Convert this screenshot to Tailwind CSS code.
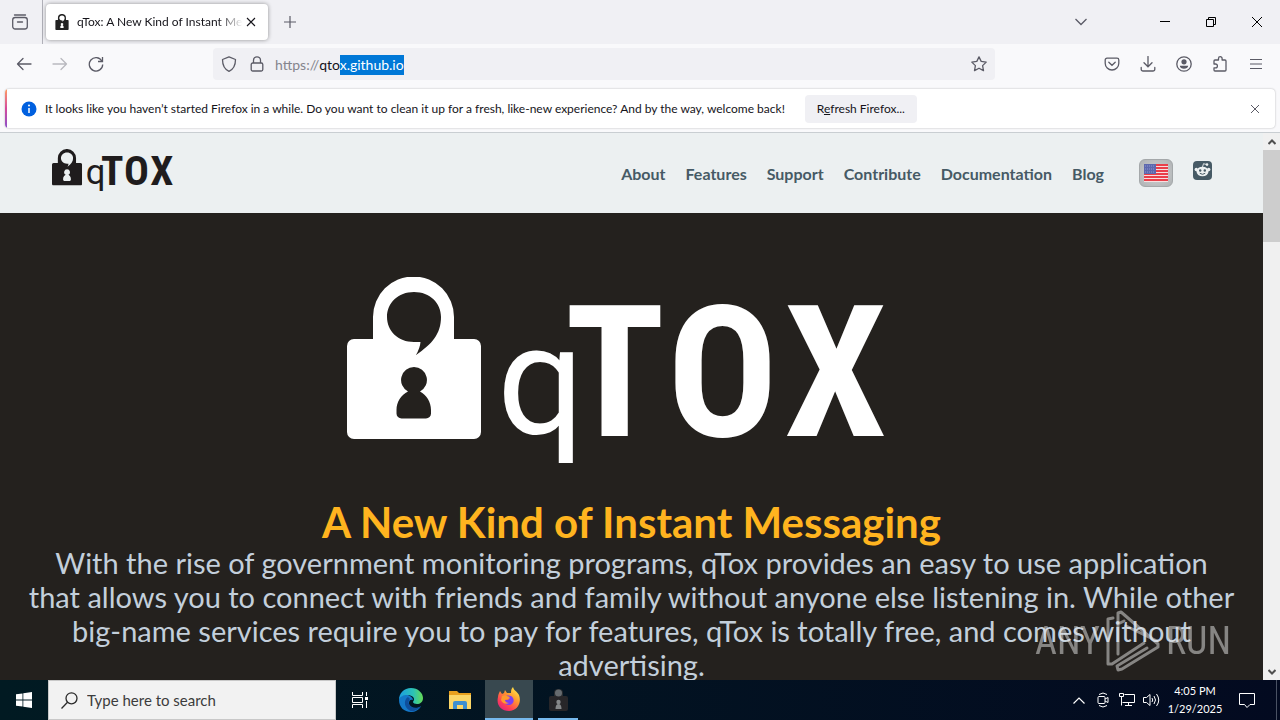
<!DOCTYPE html>
<html lang="en">
<head>
  <meta charset="UTF-8">
  <title>qTox: A New Kind of Instant Messaging</title>
  <script src="https://cdn.jsdelivr.net/npm/@tailwindcss/browser@4"></script>
</head>
<body class="flex flex-col h-screen overflow-hidden bg-[#f9f9fb] text-[#15141a] font-['Lato','Noto_Sans',sans-serif]">

  <svg class="hidden">
    <symbol id="padlock" viewBox="0 0 134 162">
      <path fill-rule="evenodd" d="M26 62V40a40.500 40.500 0 0 1 81 0V62H127a7 7 0 0 1 7 7V155a7 7 0 0 1-7 7H7a7 7 0 0 1-7-7V69a7 7 0 0 1 7-7zM67 15C51 15 40 26 40 40S51 65 67 65H73.500Q73 71 69 78C85 67 94 57 94 40C94 26 83 15 67 15zM67 90a13 13 0 0 0-6 24.500C54 118 49.500 125 49.500 133V136.500a5 5 0 0 0 5 5H79a5 5 0 0 0 5-5V133C84 125 79.500 118 73 114.500A13 13 0 0 0 67 90z"/>
    </symbol>
    <symbol id="qtox-logo" viewBox="0 0 543 186">
      <use href="#padlock" width="134" height="162"/>
      <text x="150" y="157" font-size="154" font-family="Roboto, sans-serif">q</text>
      <g font-size="184" font-weight="700" font-family="'Roboto Condensed', 'Liberation Sans Narrow', Roboto, sans-serif">
        <text x="218" y="159">T</text>
        <text x="320" y="159">O</text>
        <text x="437" y="159">X</text>
      </g>
    </symbol>
  </svg>

  <!-- Tab strip -->
  <header class="flex items-center h-11 shrink-0 bg-[#f0f0f4] text-[#5b5b66]">
    <button aria-label="Firefox View" class="w-10 h-11 flex items-center justify-center">
      <svg class="size-4" viewBox="0 0 16 16" fill="none" stroke="currentColor" stroke-width="1.300"><path d="M2.500 1h11" stroke-linecap="round"/><rect x=".7" y="3.500" width="14.600" height="11.500" rx="2.500"/><path d="M5.500 8h5" stroke-linecap="round"/></svg>
    </button>
    <div class="w-px h-11 ml-[2px] bg-[#b0b0b8]"></div>
    <div class="flex items-center w-[222px] h-9 ml-[3px] px-[9px] bg-white rounded shadow-[0_0_4px_rgba(0,0,0,0.4)] text-[#15141a]">
      <svg class="w-[14px] h-4 shrink-0" fill="#222222"><use href="#padlock"/></svg>
      <span class="flex-1 ml-2 text-xs whitespace-nowrap overflow-hidden mask-r-from-85% mask-r-to-100%">qTox: A New Kind of Instant Messaging</span>
      <button aria-label="Close tab" class="w-4 h-6 flex items-center justify-center">
        <svg class="size-[10px]" viewBox="0 0 10 10" stroke="currentColor" stroke-width="1.100"><path d="M1 1l8 8M9 1l-8 8"/></svg>
      </button>
    </div>
    <button aria-label="New tab" class="size-8 ml-[6px] flex items-center justify-center">
      <svg class="size-3" viewBox="0 0 12 12" stroke="currentColor" stroke-width="1.200"><path d="M6 0v12M0 6h12"/></svg>
    </button>
    <button aria-label="List all tabs" class="size-8 ml-auto mr-[45px] flex items-center justify-center">
      <svg class="w-3 h-2" viewBox="0 0 12 8" fill="none" stroke="currentColor" stroke-width="1.300"><path d="M.5 1L6 6.500 11.500 1"/></svg>
    </button>
    <button aria-label="Minimize" class="w-[46px] h-11 flex items-center justify-center text-black">
      <svg class="size-[10px]" viewBox="0 0 10 10" stroke="currentColor"><path d="M0 4.500h10"/></svg>
    </button>
    <button aria-label="Restore" class="w-[46px] h-11 flex items-center justify-center text-black">
      <svg class="size-[10px]" viewBox="0 0 10 10" fill="none" stroke="currentColor"><path d="M.5 2.500h7v7h-7zM2.500 2.500v-2h7v7h-2"/></svg>
    </button>
    <button aria-label="Close" class="w-[46px] h-11 flex items-center justify-center text-black">
      <svg class="size-[10px]" viewBox="0 0 10 10" stroke="currentColor"><path d="M0 0l10 10M10 0L0 10"/></svg>
    </button>
  </header>

  <!-- Toolbar -->
  <div class="flex items-center px-[6px] pt-1 pb-[9px] shrink-0 text-[#5b5b66]">
    <button aria-label="Back" class="w-9 h-8 flex items-center justify-center">
      <svg class="size-4" viewBox="0 0 16 16" fill="none" stroke="currentColor" stroke-width="1.300" stroke-linecap="round" stroke-linejoin="round"><path d="M15 8H1.500M7 2.500L1.500 8 7 13.500"/></svg>
    </button>
    <button aria-label="Forward" disabled class="w-9 h-8 flex items-center justify-center opacity-40">
      <svg class="size-4" viewBox="0 0 16 16" fill="none" stroke="currentColor" stroke-width="1.300" stroke-linecap="round" stroke-linejoin="round"><path d="M1 8h13.500M9 2.500L14.500 8 9 13.500"/></svg>
    </button>
    <button aria-label="Reload" class="w-9 h-8 flex items-center justify-center">
      <svg class="size-4" viewBox="0 0 16 16" fill="none" stroke="currentColor" stroke-width="1.300"><path d="M13.800 5A6.700 6.700 0 1 0 14.700 8.500"/><path d="M14.500 1v4.500H10" /></svg>
    </button>
    <form class="flex-1 flex items-center h-8 mx-[99px] bg-[#f0f0f4] rounded-sm">
      <button type="button" aria-label="Tracking protection" class="w-8 h-8 flex items-center justify-center">
        <svg class="size-4" viewBox="0 0 16 16" fill="none" stroke="currentColor" stroke-width="1.300" stroke-linejoin="round"><path d="M8 .8L14.500 3.500C14.500 9 12 13.500 8 15.300 4 13.500 1.500 9 1.500 3.500z"/></svg>
      </button>
      <button type="button" aria-label="Site information" class="w-6 h-8 flex items-center justify-center">
        <svg class="size-4" viewBox="0 0 16 16" fill="none" stroke="currentColor" stroke-width="1.300"><rect x="2.200" y="7" width="11.600" height="8" rx="1.500"/><path d="M4.500 7V4.300a3.500 3.500 0 0 1 7 0V7"/></svg>
      </button>
      <label for="url" class="ml-[6px] pt-px text-sm text-[#85858d]">https://</label>
      <input id="url" type="text" value="qtox.github.io" autofocus class="flex-1 min-w-0 pt-px text-sm text-[#15141a] outline-none selection:bg-[#0078d7] selection:text-white">
      <button type="button" aria-label="Bookmark" class="size-8 flex items-center justify-center">
        <svg class="size-4" viewBox="0 0 16 16" fill="none" stroke="currentColor" stroke-width="1.300" stroke-linejoin="round"><path d="M8 .9l2.200 4.500 5 .7-3.600 3.500.9 5L8 12.200l-4.500 2.400.9-5L.8 6.100l5-.7z"/></svg>
      </button>
    </form>
    <button aria-label="Save to Pocket" class="w-9 h-8 flex items-center justify-center">
      <svg class="size-4" viewBox="0 0 16 16" fill="none" stroke="currentColor" stroke-width="1.300"><path d="M3 2.200h10a1.800 1.800 0 0 1 1.800 1.800v3.200a6.800 6.800 0 0 1-13.600 0V4A1.800 1.800 0 0 1 3 2.200z"/><path d="M4.800 6.300L8 9.300l3.200-3" stroke-linecap="round"/></svg>
    </button>
    <button aria-label="Downloads" class="w-9 h-8 flex items-center justify-center">
      <svg class="size-4" viewBox="0 0 16 16" fill="none" stroke="currentColor" stroke-width="1.300" stroke-linecap="round"><path d="M8 .5v10M4 6.800l4 4 4-4M1.200 11.500v1.700A1.800 1.800 0 0 0 3 15h10a1.800 1.800 0 0 0 1.800-1.800v-1.700"/></svg>
    </button>
    <button aria-label="Account" class="w-9 h-8 flex items-center justify-center">
      <svg class="size-4" viewBox="0 0 16 16" fill="none" stroke="currentColor" stroke-width="1.300"><circle cx="8" cy="8" r="7.200"/><circle cx="8" cy="5.800" r="2.600" fill="currentColor" stroke="none"/><path d="M3.800 9.800h8.400c0 1.900-2 3-4.200 3s-4.200-1.100-4.200-3z" fill="currentColor" stroke="none"/></svg>
    </button>
    <button aria-label="Extensions" class="w-9 h-8 flex items-center justify-center">
      <svg class="size-4" viewBox="0 0 16 16" fill="none" stroke="currentColor" stroke-width="1.300" stroke-linejoin="round"><path d="M2 8V5a1 1 0 0 1 1-1h3.500V2.500a1.800 1.800 0 0 1 3.600 0V4H13a1 1 0 0 1 1 1v9a1 1 0 0 1-1 1H3a1 1 0 0 1-1-1v-2.200h1.500a1.900 1.900 0 0 0 0-3.800z"/></svg>
    </button>
    <button aria-label="Menu" class="w-9 h-8 flex items-center justify-center">
      <svg class="size-4" viewBox="0 0 16 16" stroke="currentColor" stroke-width="1.200"><path d="M2 3.500h12M2 8h12M2 12.500h12"/></svg>
    </button>
  </div>

  <!-- Notification -->
  <div class="shrink-0 px-[5px] pb-1 border-b border-[#c9ced2]">
    <div class="flex items-center h-[39px] bg-white rounded shadow-[0_0_2px_rgba(0,0,0,0.3)] overflow-hidden text-xs">
      <div class="w-[2px] h-full bg-linear-to-b from-[#ff9a5a] via-[#d5489b] to-[#8a4bc8]"></div>
      <svg class="size-4 ml-[14px] shrink-0" viewBox="0 0 16 16"><circle cx="8" cy="8" r="7.500" fill="#0060df"/><path d="M8 7v5" stroke="#fff" stroke-width="1.500"/><circle cx="8" cy="4.500" r="1" fill="#fff"/></svg>
      <p class="ml-2 whitespace-nowrap">It looks like you haven’t started Firefox in a while. Do you want to clean it up for a fresh, like-new experience? And by the way, welcome back!</p>
      <button class="w-28 h-7 ml-5 shrink-0 bg-[#f0f0f4] rounded">R<u>e</u>fresh Firefox...</button>
      <button aria-label="Dismiss" class="size-8 ml-auto mr-1 flex items-center justify-center">
        <svg class="size-2" viewBox="0 0 8 8" stroke="#5b5b66"><path d="M0 0l8 8M8 0L0 8"/></svg>
      </button>
    </div>
  </div>

  <!-- Web page -->
  <div class="relative flex flex-1 min-h-0 bg-[#24211e]">
    <div class="flex-1 min-w-0 overflow-hidden">
      <div class="flex items-center h-20 pl-[52px] pr-[51px] bg-[#ecf0f1] text-[#465a65]">
        <a href="#" aria-label="qTox" class="text-[#1f1c1d]"><svg class="w-[122px] h-[42px] mb-[6px]" fill="currentColor"><use href="#qtox-logo"/></svg></a>
        <nav class="flex items-center gap-5 ml-auto pt-[2px] text-base font-bold">
          <a href="#">About</a>
          <a href="#">Features</a>
          <a href="#">Support</a>
          <a href="#">Contribute</a>
          <a href="#">Documentation</a>
          <a href="#">Blog</a>
        </nav>
        <button aria-label="Language" class="w-[34px] h-7 ml-[35px] flex items-center justify-center rounded-md border border-[#a4a8aa] bg-radial from-[#d4d6d7] to-[#aeb1b3]">
          <svg class="w-6 h-[18px]" viewBox="0 0 24 18"><rect width="24" height="18" fill="#f7dfe0"/><path d="M0 1h24M0 4h24M0 7h24M0 10h24M0 13h24M0 16h24" stroke="#ea3f4a" stroke-width="1.900"/><rect width="12" height="10" fill="#5d68ae"/><path d="M1 2h10M1 5h10M1 8h10" stroke="#8f99cf" stroke-dasharray="1 1"/></svg>
        </button>
        <a href="#" aria-label="Reddit" class="ml-5 mb-[6px]">
          <svg class="size-[19px]" viewBox="0 0 19 19"><rect width="19" height="19" rx="4" fill="#465a65"/><g fill="#ecf0f1"><ellipse cx="9.500" cy="10.500" rx="6" ry="4.800"/><circle cx="3.300" cy="8.500" r="1.700"/><circle cx="15.700" cy="8.500" r="1.700"/><circle cx="14" cy="3.600" r="1.300"/></g><path d="M9.500 6l1-3.300 3 .8" fill="none" stroke="#ecf0f1" stroke-width=".9"/><g fill="#465a65"><circle cx="7.200" cy="9.500" r="1.200"/><circle cx="11.800" cy="9.500" r="1.200"/></g><path d="M6.800 12.300q2.700 2 5.400 0" fill="none" stroke="#465a65"/></svg>
        </a>
      </div>
      <main class="px-7 pt-16 text-center">
        <svg class="w-[543px] h-[186px] mx-auto -translate-x-[13px]" fill="#fff"><use href="#qtox-logo"/></svg>
        <h1 class="mt-[35px] text-[42px] leading-[48px] font-bold text-[#ffb41f]">A New Kind of Instant Messaging</h1>
        <p class="text-[29px] leading-[34px] text-[#c3cfdb]">With the rise of government monitoring programs, qTox provides an easy to use application that allows you to connect with friends and family without anyone else listening in. While other big-name services require you to pay for features, qTox is totally free, and comes without advertising.</p>
      </main>
    </div>

    <!-- Scroll bar -->
    <div class="flex flex-col items-center justify-between w-[17px] shrink-0 bg-[#f0f0f0] text-[#505050]">
      <button aria-label="Scroll up" class="h-[17px]"><svg class="w-2 h-[6px]" viewBox="0 0 8 6" fill="none" stroke="currentColor" stroke-width="2"><path d="M.5 5L4 1.500 7.500 5"/></svg></button>
      <div class="w-full h-[92px] mb-auto bg-[#cdcdcd]"></div>
      <button aria-label="Scroll down" class="h-[17px]"><svg class="w-2 h-[6px]" viewBox="0 0 8 6" fill="none" stroke="currentColor" stroke-width="2"><path d="M.5 1L4 4.500 7.500 1"/></svg></button>
    </div>

    <!-- Watermark over the page -->
    <div class="absolute right-[49px] bottom-2 flex items-center gap-[6px] opacity-50 text-[#e8e8e8] text-[38px] leading-none font-['Roboto_Condensed','Liberation_Sans_Narrow','Roboto',sans-serif]">
      <span>ANY</span>
      <svg class="w-[54px] h-[62px]" viewBox="0 0 54 62" fill="none" stroke="currentColor" stroke-width="3" stroke-linejoin="round" stroke-linecap="round"><path d="M12 44V3L15 2 52 34V37L16 59 12 60 11 56 41 38M20 16L51 31M12 14L18 11M7 8L2 9V54L6 54 38 33"/></svg>
      <span>RUN</span>
    </div>
  </div>

  <!-- Taskbar -->
  <footer class="flex items-center h-10 shrink-0 bg-linear-to-r from-[#011a22] to-[#030a20] text-white">
    <button aria-label="Start" class="w-12 h-10 flex items-center justify-center">
      <svg class="size-4" viewBox="0 0 16 16" fill="#fff"><path d="M0 2.300L6.500 1.400V7.600H0zM7.300 1.300L16 0V7.600H7.300zM0 8.400H6.500V14.600L0 13.700zM7.300 8.400H16V16L7.300 14.700z"/></svg>
    </button>
    <div class="flex items-center w-72 h-10 pl-3 bg-[#f2f2f2] border border-[#c8c8c8] text-[#2b2b2b]">
      <label for="search" aria-label="Search"><svg class="size-[17px]" viewBox="0 0 17 17" fill="none" stroke="currentColor" stroke-width="1.300"><circle cx="10.500" cy="6.300" r="5.500"/><path d="M6.500 10.300L.5 16.500"/></svg></label>
      <input id="search" type="text" placeholder="Type here to search" class="flex-1 min-w-0 ml-[9px] text-[15px] placeholder:text-[#3c3c3c] outline-none">
    </div>
    <div class="flex gap-px">
      <button aria-label="Task view" class="w-12 h-10 mr-[2px] flex items-center justify-center">
        <svg class="w-[17px] h-4" viewBox="0 0 17 16" fill="none" stroke="#fff"><path d="M.5 0v3.500h10V0M.5 16v-3.500h10V16M.5 5.500h10v5H.5zM14.500 0v4M14.500 9v7"/><path d="M14.500 5v3" stroke-width="3"/></svg>
      </button>
      <button aria-label="Microsoft Edge" class="w-12 h-10 flex items-center justify-center">
        <svg class="size-6" viewBox="0 0 24 24"><defs><linearGradient id="edge" x1="0" x2="1"><stop offset="0" stop-color="#1b9de2"/><stop offset=".6" stop-color="#2cc3b5"/><stop offset="1" stop-color="#66db54"/></linearGradient></defs><path fill="#1478c8" d="M0 12C1 7 6 6 9 7c3 1 5 3 5 5-2-1-4 0-4 3 0 4 4 6 8 5 2 0 3-1 4-2-2 4-6 6-10 6C5 24 0 19 0 12z"/><path fill="#0f4f9c" d="M9 9c-3 2-4 6-2 10 2 3 5 5 8 4 3-1 6-3 7-5-4 3-10 2-12-2-1-2 0-4 1-5z"/><path fill="url(#edge)" d="M0 12C0 5 5 0 12 0s12 5 12 10c0 4-3 6-6 6-2 0-4-1-4-2s1-1 1-3c0-2-3-4-7-4-4 0-7 2-8 5z"/></svg>
      </button>
      <button aria-label="File Explorer" class="w-12 h-10 flex items-center justify-center">
        <svg class="w-[22px] h-[18px]" viewBox="0 0 22 18"><path fill="#e8a01d" d="M0 0h8l2 2h12v5H0z"/><path fill="#fbd667" d="M0 4h22v14H0z"/><path fill="#3d8fd1" d="M4 18v-6a2 2 0 0 1 2-2h10a2 2 0 0 1 2 2v6h-4v-4H8v4z"/></svg>
      </button>
      <button aria-label="Firefox" class="w-12 h-10 flex items-center justify-center bg-[#38484f] border-b-2 border-[#76b9ed]">
        <svg class="size-6" viewBox="0 0 24 24"><defs><linearGradient id="fox" x1=".9" y1="0" x2=".2" y2="1"><stop offset="0" stop-color="#fff44f"/><stop offset=".4" stop-color="#ff9a2e"/><stop offset=".75" stop-color="#ff4055"/><stop offset="1" stop-color="#e0217f"/></linearGradient></defs><path fill="url(#fox)" d="M3 4l2 3 2-1 1-3 2 3h4c0-2 0-4 2-6 1 4 4 4 6 8 3 8-2 16-10 16S-1 18 1 10c0-2 1-4 2-6z"/><path fill="#7b3ff2" d="M8 10c2-2 6-2 8 1 2 4-1 7-4 7s-5-2-5-5l4 0 2-2z"/><path fill="#ff9a2e" d="M5 9c2-1 4-1 5 0l3 1-2 2-3 1c0 2 2 3 4 3-3 2-7 0-8-3z"/></svg>
      </button>
      <button aria-label="qTox" class="w-12 h-10 px-1 flex flex-col items-center justify-end">
        <span class="flex-1 flex items-center"><svg class="w-[19px] h-[23px]" viewBox="0 0 19 23"><rect x="5" y="1" width="9" height="12" rx="4" fill="#272b2f"/><rect y="8" width="19" height="15" rx="2" fill="#272629"/><circle cx="9.500" cy="5" r="3.500" fill="#666b6f"/><circle cx="9.500" cy="14" r="2.200" fill="#85888a"/><path d="M6.500 21q0-5 3-5t3 5z" fill="#85888a"/></svg></span>
        <span class="w-10 h-[2px] bg-[#76b9ed]"></span>
      </button>
    </div>
    <div class="flex items-center ml-auto">
      <button aria-label="Show hidden icons" class="w-6 h-10 flex items-center justify-center"><svg class="w-3 h-[7px]" viewBox="0 0 12 7" fill="none" stroke="#fff" stroke-width="1.200"><path d="M.5 6.500L6 1l5.500 5.500"/></svg></button>
      <button aria-label="Meet Now" class="w-6 h-10 flex items-center justify-center"><svg class="size-4" viewBox="0 0 16 16" fill="none" stroke="#fff"><rect x="3" y="4.500" width="7" height="7" rx="1"/><path d="M10 7l3-1.500v5L10 9M4 2.500q4-3 8 0M4 13.500q4 3 8 0"/></svg></button>
      <button aria-label="Network" class="w-6 h-10 flex items-center justify-center"><svg class="size-4" viewBox="0 0 16 16" fill="none" stroke="#fff"><path d="M5.500 2.500h10v8h-12M9.500 10.500v3M6 13.500h7M.5 1.500h4v3h-4zM2.500 4.500v9"/></svg></button>
      <button aria-label="Volume" class="w-6 h-10 flex items-center justify-center"><svg class="w-[17px] h-4" viewBox="0 0 17 16" fill="none" stroke="#fff"><path d="M.5 5.500h3l3.500-3v11l-3.500-3h-3zM9 6q1.500 2 0 4M11 4q3 4 0 8M13.500 2q4.500 6 0 12"/></svg></button>
      <div class="w-16 text-center text-[11px] leading-[18px]">
        <p>4:05 PM</p>
        <p>1/29/2025</p>
      </div>
      <button aria-label="Notifications" class="w-10 h-10 flex items-center justify-center"><svg class="size-4" viewBox="0 0 16 16" fill="none" stroke="#fff"><path d="M.5 1.500h15v11H11L8 15.500 5.500 12.500h-5z"/></svg></button>
      <div class="w-px h-10 ml-[9px] mr-[3px] bg-[#4a5263]"></div>
    </div>
  </footer>

  <script>
    const url = document.getElementById("url");
    url.focus();
    url.setSelectionRange(3, url.value.length);
  </script>
</body>
</html>
